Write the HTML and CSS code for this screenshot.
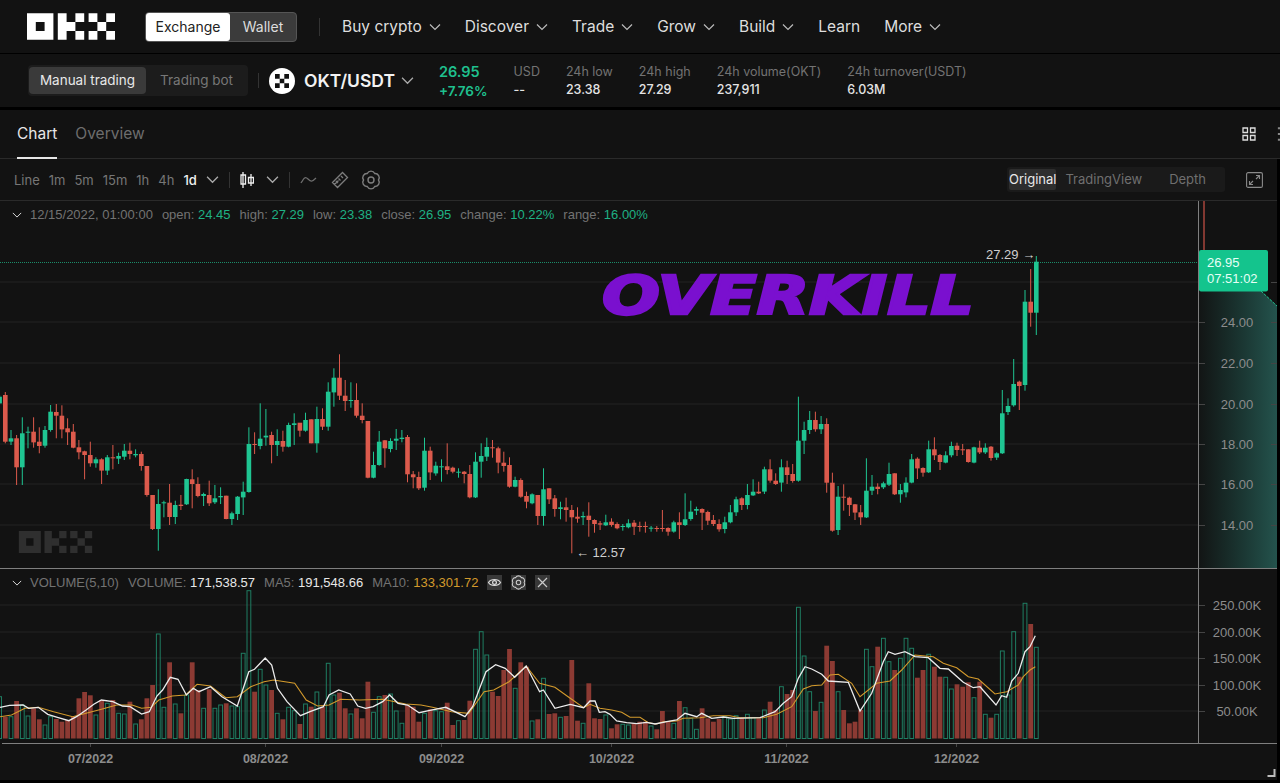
FILE: index.html
```html
<!DOCTYPE html>
<html lang="en">
<head>
    <meta charset="UTF-8">
    <title>OKT/USDT - OKX</title>
    <link rel="stylesheet" href="styles.css">
</head>
<body>
    <svg class="icon-defs" width="0" height="0">
        <symbol id="okx-logo" viewBox="0 0 88 26.4">
            <path d="M0 0h26.4v26.4H0zM8.8 8.8v8.8h8.8V8.8z" fill-rule="evenodd"/>
            <path d="M30.8 0h8.8v26.4h-8.8zM39.6 8.8h8.8v8.8h-8.8zM48.4 0h8.8v8.8h-8.8zM48.4 17.6h8.8v8.8h-8.8z"/>
            <path d="M61.6 0h8.8v8.8h-8.8zM79.2 0H88v8.8h-8.8zM70.4 8.8h8.8v8.8h-8.8zM61.6 17.6h8.8v8.8h-8.8zM79.2 17.6H88v8.8h-8.8z"/>
        </symbol>
        <symbol id="chevron" viewBox="0 0 12 12">
            <path d="M1 3.5l5 5 5-5" fill="none" stroke="currentColor" stroke-width="1.2"/>
        </symbol>
        <symbol id="gear" viewBox="0 0 24 24">
            <path d="M21 12A5 5 0 0 1 16.5 19.8A5 5 0 0 1 7.5 19.8A5 5 0 0 1 3 12A5 5 0 0 1 7.5 4.2A5 5 0 0 1 16.5 4.2A5 5 0 0 1 21 12z" fill="none" stroke="currentColor" stroke-width="1.7"/>
            <circle cx="12" cy="12" r="3.6" fill="none" stroke="currentColor" stroke-width="1.7"/>
        </symbol>
    </svg>

    <header class="topbar">
        <svg class="logo"><use href="#okx-logo"/></svg>
        <div class="switch">
            <span class="switch-item switch-on">Exchange</span>
            <span class="switch-item">Wallet</span>
        </div>
        <span class="topbar-sep"></span>
        <nav class="nav">
            <a class="nav-item">Buy crypto <svg class="chev"><use href="#chevron"/></svg></a>
            <a class="nav-item">Discover <svg class="chev"><use href="#chevron"/></svg></a>
            <a class="nav-item">Trade <svg class="chev"><use href="#chevron"/></svg></a>
            <a class="nav-item">Grow <svg class="chev"><use href="#chevron"/></svg></a>
            <a class="nav-item">Build <svg class="chev"><use href="#chevron"/></svg></a>
            <a class="nav-item">Learn</a>
            <a class="nav-item">More <svg class="chev"><use href="#chevron"/></svg></a>
        </nav>
    </header>

    <section class="ticker">
        <div class="mode">
            <span class="mode-item mode-on">Manual trading</span>
            <span class="mode-item">Trading bot</span>
        </div>
        <span class="ticker-sep"></span>
        <svg class="coin" viewBox="0 0 26 26">
            <circle cx="13" cy="13" r="13" fill="#fff"/>
            <path d="M6 6h4.700v4.700H6zM15.300 6H20v4.700h-4.700zM10.700 10.700h4.600v4.600h-4.600zM6 15.300h4.700V20H6zM15.300 15.300H20V20h-4.700z" fill="#111"/>
        </svg>
        <span class="pair">OKT/USDT</span>
        <svg class="pair-chev"><use href="#chevron"/></svg>
        <div class="stats">
            <div class="stat-price">
                <span class="price-now">26.95</span>
                <span class="price-pct">+7.76%</span>
            </div>
            <div class="stat"><span class="stat-label">USD</span><span class="stat-value">--</span></div>
            <div class="stat"><span class="stat-label">24h low</span><span class="stat-value">23.38</span></div>
            <div class="stat"><span class="stat-label">24h high</span><span class="stat-value">27.29</span></div>
            <div class="stat"><span class="stat-label">24h volume(OKT)</span><span class="stat-value">237,911</span></div>
            <div class="stat"><span class="stat-label">24h turnover(USDT)</span><span class="stat-value">6.03M</span></div>
        </div>
    </section>

    <main class="panel">
        <div class="tabs">
            <a class="tab tab-on">Chart</a>
            <a class="tab">Overview</a>
            <div class="tabs-right">
                <svg class="tab-icon" viewBox="0 0 14 14">
                    <path d="M1 1h4.500v4.500H1zM8.500 1H13v4.500H8.500zM1 8.500h4.500V13H1zM8.500 8.500H13V13H8.500z" fill="none" stroke="#ddd" stroke-width="1.300"/>
                </svg>
                <svg class="tab-icon" viewBox="0 0 14 16">
                    <path d="M0 1.500h10M0 8h10M0 14.500h10" stroke="#888" stroke-width="2.200"/>
                </svg>
            </div>
        </div>

        <div class="toolbar">
            <a class="tool">Line</a>
            <a class="tool">1m</a>
            <a class="tool">5m</a>
            <a class="tool">15m</a>
            <a class="tool">1h</a>
            <a class="tool">4h</a>
            <a class="tool tool-on">1d</a>
            <svg class="tool-chev"><use href="#chevron"/></svg>
            <span class="tool-sep"></span>
            <svg class="tool-icon" viewBox="0 0 14 18">
                <path d="M3 1v16M3.500 4H1v9h4.500V4zM11 3v12M8.500 6.500v5.500h5V6.500z" fill="none" stroke="#eee" stroke-width="1.300"/>
            </svg>
            <svg class="tool-chev tool-chev-wide"><use href="#chevron"/></svg>
            <span class="tool-sep"></span>
            <svg class="tool-icon tool-wave" viewBox="0 0 17 10">
                <path d="M1 8c3-5 4-7 7-4s4 3 8-1" fill="none" stroke="#6f6f6f" stroke-width="1.200"/>
            </svg>
            <svg class="tool-icon tool-ruler" viewBox="0 0 18 18">
                <path d="M1.500 11.500L11.500 1.500l5 5-10 10zM5 10l2 2M7.500 7.500l2 2M10 5l2 2M5 5M3.500 13.500l4-4" fill="none" stroke="#7d7d7d" stroke-width="1.300"/>
            </svg>
            <svg class="tool-icon tool-gear"><use href="#gear"/></svg>
            <div class="toolbar-right">
                <div class="views">
                    <span class="view view-on">Original</span>
                    <span class="view">TradingView</span>
                    <span class="view">Depth</span>
                </div>
                <svg class="expand" viewBox="0 0 17 16">
                    <rect x="0.600" y="0.600" width="15.800" height="14.800" rx="1.500" fill="none" stroke="#8a8a8a" stroke-width="1.100"/>
                    <path d="M10 3.500h3.500V7M13.500 3.500L10 7M7 12.500H3.500V9M3.500 12.500L7 9" fill="none" stroke="#8a8a8a" stroke-width="1.100"/>
                </svg>
            </div>
        </div>

        <div class="chart">
            <svg class="chart-svg" viewBox="0 201 1277 579">
                <defs>
                    <linearGradient id="depth-fill" x1="0" x2="1" y1="0" y2="0">
                        <stop offset="0" stop-color="#1d4f47" stop-opacity="0.05"/>
                        <stop offset="1" stop-color="#24534d"/>
                    </linearGradient>
                </defs>

                <path class="grid" d="M0 282H1198M0 322H1198M0 363H1198M0 404H1198M0 444H1198M0 484H1198M0 525H1198"/>
                <path class="grid" d="M0 605H1198M0 632H1198M0 658H1198M0 685H1198M0 711H1198"/>

                <g id="candles"></g>
                <g id="volumes"></g>
                <polyline id="ma10" class="ma-orange"/>
                <polyline id="ma5" class="ma-white"/>

                <text class="watermark-text" x="0" y="0"></text>
                <use href="#okx-logo" x="18" y="531" width="75" height="22" class="watermark"/>
                <text class="overkill" x="602" y="314" textLength="372" lengthAdjust="spacingAndGlyphs">OVERKILL</text>

                <path class="last-line" d="M0 262.500H1198"/>
                <text class="peak" x="986" y="259">27.29 →</text>
                <text class="peak" x="576" y="557">← 12.57</text>

                <path class="depth-area" d="M1199 291H1261L1277 306V568H1199z"/>
                <path class="depth-edge" d="M1261 291L1277 306"/>
                <path class="depth-red" d="M1204 201V251"/>

                <path class="axis" d="M0 568.500H1277M1198.500 201V743M2 743.500H1277"/>
                <path class="axis-tick" d="M1199 282.500H1205M1271 282.500H1277M1199 322.500H1205M1271 322.500H1277M1199 363.500H1205M1271 363.500H1277M1199 404.500H1205M1271 404.500H1277M1199 444.500H1205M1271 444.500H1277M1199 484.500H1205M1271 484.500H1277M1199 525.500H1205M1271 525.500H1277"/>
                <path class="axis-tick" d="M1199 605.500H1205M1199 632.500H1205M1199 658.500H1205M1199 685.500H1205M1199 711.500H1205"/>
                <path class="axis-tick" d="M90.500 744V747M265.500 744V747M441.500 744V747M611.500 744V747M786.500 744V747M956.500 744V747"/>

                <g class="price-axis">
                    <text x="1237" y="327">24.00</text>
                    <text x="1237" y="368">22.00</text>
                    <text x="1237" y="409">20.00</text>
                    <text x="1237" y="449">18.00</text>
                    <text x="1237" y="489">16.00</text>
                    <text x="1237" y="530">14.00</text>
                </g>
                <g class="volume-axis">
                    <text x="1237" y="610">250.00K</text>
                    <text x="1237" y="637">200.00K</text>
                    <text x="1237" y="663">150.00K</text>
                    <text x="1237" y="690">100.00K</text>
                    <text x="1237" y="716">50.00K</text>
                </g>
                <g class="time-axis">
                    <text x="90.500" y="763">07/2022</text>
                    <text x="265.500" y="763">08/2022</text>
                    <text x="441.500" y="763">09/2022</text>
                    <text x="611.500" y="763">10/2022</text>
                    <text x="786.500" y="763">11/2022</text>
                    <text x="956.500" y="763">12/2022</text>
                </g>

                <rect class="last-tag" x="1199" y="250" width="69" height="41.500" rx="2"/>
                <text class="last-tag-text" x="1207" y="267">26.95</text>
                <text class="last-tag-text" x="1207" y="283">07:51:02</text>
                <path class="corner" d="M1267.500 776H1274.500V769" />
            </svg>

            <div class="legend legend-main">
                <svg class="legend-chev"><use href="#chevron"/></svg>
                <span>12/15/2022, 01:00:00</span>
                <span>open: <b class="up">24.45</b></span>
                <span>high: <b class="up">27.29</b></span>
                <span>low: <b class="up">23.38</b></span>
                <span>close: <b class="up">26.95</b></span>
                <span>change: <b class="up">10.22%</b></span>
                <span>range: <b class="up">16.00%</b></span>
            </div>

            <div class="legend legend-vol">
                <svg class="legend-chev"><use href="#chevron"/></svg>
                <span>VOLUME(5,10)</span>
                <span>VOLUME: <b class="white">171,538.57</b></span>
                <span>MA5: <b class="white">191,548.66</b></span>
                <span>MA10: <b class="gold">133,301.72</b></span>
                <span class="legend-btns">
                    <span class="legend-btn">
                        <svg viewBox="0 0 15 15"><path d="M1.500 7.500C4 3.500 11 3.500 13.500 7.500C11 11.500 4 11.500 1.500 7.500z" fill="none" stroke="#ddd" stroke-width="1.200"/><circle cx="7.500" cy="7.500" r="1.900" fill="none" stroke="#ddd" stroke-width="1.200"/></svg>
                    </span>
                    <span class="legend-btn"><svg class="legend-gear"><use href="#gear"/></svg></span>
                    <span class="legend-btn">
                        <svg viewBox="0 0 15 15"><path d="M3 3l9 9M12 3l-9 9" stroke="#ccc" stroke-width="1.200"/></svg>
                    </span>
                </span>
            </div>
        </div>
    </main>

    <script src="chart.js"></script>
</body>
</html>
```

FILE: styles.css
```css
* {
    box-sizing: border-box;
}
body {
    margin: 0;
    width: 1280px;
    height: 783px;
    overflow: hidden;
    background-color: #000;
    font-family: Inter, "Liberation Sans", sans-serif;
    color: #e6e6e6;
    display: flex;
    flex-direction: column;
}
b {
    font-weight: normal;
}
.icon-defs {
    position: absolute;
}

/* top bar */
.topbar {
    height: 53px;
    flex: none;
    background-color: #121212;
    display: flex;
    align-items: center;
    padding-left: 27px;
}
.logo {
    width: 88px;
    height: 27px;
    fill: #fff;
}
.switch {
    display: flex;
    height: 30px;
    margin-left: 30px;
    background-color: #3b3b3b;
    border: 1px solid #555;
    border-radius: 4px;
}
.switch-item {
    width: 66px;
    font-size: 14px;
    line-height: 28px;
    text-align: center;
    color: #ddd;
}
.switch-on {
    width: 84px;
    background-color: #fff;
    color: #222;
    border-radius: 3px;
}
.topbar-sep {
    width: 1px;
    height: 18px;
    margin: 0 22px;
    background-color: #333;
}
.nav {
    display: flex;
    gap: 24px;
}
.nav-item {
    display: flex;
    align-items: center;
    font-size: 15.500px;
    color: #dedede;
}
.chev {
    width: 12px;
    height: 12px;
    margin-left: 7px;
    color: #bbb;
}

/* pair bar */
.ticker {
    height: 53px;
    margin-top: 1px;
    flex: none;
    background-color: #121212;
    display: flex;
    align-items: center;
    padding-left: 28px;
}
.mode {
    display: flex;
    height: 31px;
    padding: 2px 1px;
    width: 220px;
    background-color: #1c1c1c;
    border-radius: 4px;
}
.mode-item {
    font-size: 13.500px;
    line-height: 27px;
    padding: 0 14px;
    color: #777;
    white-space: nowrap;
}
.mode-on {
    width: 119px;
    padding: 0;
    text-align: center;
    background-color: #3a3a3a;
    color: #e8e8e8;
    border-radius: 4px;
}
.ticker-sep {
    width: 1px;
    height: 15px;
    margin: 0 10px;
    background-color: #333;
}
.coin {
    width: 26px;
    height: 26px;
}
.pair {
    margin-left: 9px;
    font-size: 17.500px;
    font-weight: 600;
    color: #f2f2f2;
}
.pair-chev {
    width: 13px;
    height: 13px;
    margin-left: 6px;
    color: #aaa;
}
.stats {
    display: flex;
    gap: 26px;
    margin-left: 25px;
}
.stat-price {
    display: flex;
    flex-direction: column;
    gap: 3px;
    font-weight: 600;
    color: #1fc08e;
}
.price-now {
    font-size: 14.500px;
}
.price-pct {
    font-size: 13.500px;
}
.stat {
    display: flex;
    flex-direction: column;
    gap: 3px;
    padding-top: 1px;
    font-size: 12.500px;
}
.stat-label {
    color: #737373;
}
.stat-value {
    color: #e4e4e4;
    font-weight: 500;
}

/* chart panel */
.panel {
    flex: none;
    width: 1280px;
    height: 670px;
    margin-top: 3px;
    display: flex;
    flex-direction: column;
}
.tabs {
    height: 49px;
    flex: none;
    background-color: #121212;
    border-bottom: 1px solid #2a2a2a;
    display: flex;
    padding-left: 17px;
    gap: 18px;
}
.tab {
    font-size: 15.500px;
    line-height: 47px;
    color: #6d6d6d;
}
.tab-on {
    color: #e6e6e6;
    height: 49px;
    border-bottom: 2px solid #e6e6e6;
}
.tabs-right {
    margin-left: auto;
    display: flex;
    align-items: center;
    gap: 21px;
    margin-right: -11px;
    padding-bottom: 1px;
}
.tab-icon {
    width: 14px;
    height: 14px;
}
.toolbar {
    height: 42px;
    flex: none;
    background-color: #121212;
    border-bottom: 1px solid #2a2a2a;
    display: flex;
    align-items: center;
    padding-left: 14px;
    width: 1277px;
}
.tool {
    font-size: 13px;
    color: #767676;
    margin-right: 9px;
}
.tool-on {
    color: #f0f0f0;
    font-weight: 500;
}
.tool-chev {
    width: 13px;
    height: 13px;
    color: #aaa;
}
.tool-chev-wide {
    margin-left: 12px;
}
.tool-sep {
    width: 1px;
    height: 16px;
    margin: 0 10px;
    background-color: #333;
}
.tool-icon {
    width: 14px;
    height: 18px;
}
.tool-wave {
    width: 17px;
    height: 10px;
}
.tool-ruler {
    width: 18px;
    height: 18px;
    margin-left: 14px;
}
.tool-gear {
    width: 20px;
    height: 20px;
    margin-left: 12px;
    color: #7d7d7d;
}
.toolbar-right {
    margin-left: auto;
    display: flex;
    align-items: center;
    gap: 21px;
    padding-right: 14px;
}
.views {
    display: flex;
    width: 218px;
    height: 25px;
    padding: 2px;
    background-color: #1a1a1a;
    border-radius: 3px;
}
.view {
    font-size: 13px;
    line-height: 21px;
    padding: 0 9px;
    color: #6f6f6f;
    margin-right: 9px;
}
.view-on {
    width: 66px;
    padding: 0;
    margin-right: 0;
    text-align: center;
    color: #e8e8e8;
    background-color: #2e2e2e;
    border-radius: 2px;
}
.expand {
    width: 17px;
    height: 16px;
}

/* chart body, coordinates in the svg are page pixels */
.chart {
    position: relative;
    width: 1277px;
    height: 579px;
    background-color: #121212;
}
.chart-svg {
    display: block;
    width: 1277px;
    height: 579px;
    font-family: "Liberation Sans", Arial, sans-serif;
}
.grid {
    stroke: #222;
    stroke-width: 1;
    fill: none;
}
.axis {
    stroke: #7f7f7f;
    stroke-width: 1;
    fill: none;
}
.axis-tick {
    stroke: #444;
    stroke-width: 1;
    fill: none;
}
.ma-white {
    fill: none;
    stroke: #ececec;
    stroke-width: 1.300;
}
.ma-orange {
    fill: none;
    stroke: #d39a2c;
    stroke-width: 1.100;
}
.watermark {
    fill: #2f2f2f;
}
.overkill {
    font-family: "DejaVu Sans", sans-serif;
    font-size: 53px;
    font-weight: bold;
    font-style: italic;
    fill: #7a10cf;
    stroke: #7a10cf;
    stroke-width: 2.500px;
}
.last-line {
    stroke: #1fc08e;
    stroke-width: 1;
    stroke-dasharray: 1 1;
    opacity: 0.7;
}
.peak {
    font-size: 13px;
    fill: #cfcfcf;
}
.depth-area {
    fill: url(#depth-fill);
}
.depth-edge {
    stroke: #1fc08e;
    stroke-dasharray: 3 1;
    fill: none;
}
.depth-red {
    stroke: #a8463d;
    stroke-width: 1.500;
}
.price-axis text,
.volume-axis text {
    font-size: 13px;
    fill: #8c8c8c;
    text-anchor: middle;
}
.time-axis text {
    font-size: 12.500px;
    font-weight: bold;
    fill: #8c8c8c;
    text-anchor: middle;
}
.last-tag {
    fill: #14c48d;
}
.last-tag-text {
    font-size: 13px;
    fill: #e6fff6;
}
.corner {
    stroke: #bdbdbd;
    stroke-width: 2;
    fill: none;
}
.legend {
    position: absolute;
    left: 12px;
    display: flex;
    align-items: center;
    gap: 9px;
    font-family: "Liberation Sans", Arial, sans-serif;
    font-size: 13px;
    color: #737373;
    white-space: nowrap;
}
.legend-main {
    top: 6px;
}
.legend-vol {
    top: 374px;
}
.legend-chev {
    width: 10px;
    height: 10px;
    color: #d8d8d8;
    margin-right: -1px;
}
.up {
    color: #1fb184;
}
.white {
    color: #e8e8e8;
}
.gold {
    color: #d39a2c;
}
.legend-btns {
    display: flex;
    gap: 9px;
}
.legend-btn {
    display: flex;
    width: 15px;
    height: 15px;
    background-color: #383838;
}
.legend-btn svg {
    width: 15px;
    height: 15px;
}
.legend-btn .legend-gear {
    color: #ccc;
}
```

FILE: chart.js
```js
// daily candles, numbers are read off the chart at 3x zoom: [green?, high, top, bottom, low]
var STEP = 5.665
var LEFT = 5.3

function xAt(i) {
    return LEFT + STEP * i
}

var zones = [
    { base: 380, first: -1, rows: [
        [1,45,50,70,72],[0,36,45,185,190],[1,150,175,185,195],[0,165,175,262,315],[1,112,160,262,315],[1,140,155,158,205],
        [0,112,155,187,203],[0,142,185,198,220],[1,138,150,197,203],[1,75,95,150,155],[0,72,96,107,175],[0,76,107,148,175],
        [0,115,145,157,195],[0,132,155,203,205],[0,180,202,217,238],[0,212,214,225,298],[0,185,225,250,260],[1,232,238,250,263],
        [0,235,238,272,312],[1,225,232,272,285],[0,195,232,234,268],[1,218,228,236,252],[1,192,212,230,240],[0,188,212,222,238],
        [1,208,222,226,232],[0,215,222,258,272],[0,258,258,345,350],[0,345,345,447,450],[1,328,372,447,512],[1,362,367,370,412],
        [0,312,368,411,435],[1,362,375,411,432],[0,345,374,378,390],[1,296,297,373,375],[0,268,298,312,385],[0,292,312,348,352],
        [1,338,342,348,378],[0,302,345,370,378],[1,315,355,367,372],[1,322,348,352,372],[0,347,347,417,418],[1,395,400,417,435],
        [1,348,350,402,420],[1,305,335,352,405],[1,142,192,336,338],[0,157,192,195,222],[1,70,176,198,208],[1,87,167,172,197],
        [0,155,165,195,250],[1,148,183,195,228],[0,152,183,200,215],[1,128,135,200,202],[1,100,130,135,195],[0,130,128,152,170],
        [1,98,120,152,155],[0,118,118,190,190],[1,80,117,190,218]
    ] },
    { base: 345, first: 56, rows: [
        [0,190,222,245,255],[1,112,140,245,257],[1,70,98,142,185],[0,28,98,152,165],[0,105,152,168,198],[1,112,165,167,188],
        [0,115,165,212,218],[0,175,212,225,235],[0,228,228,398,400],[1,320,360,398,400],[1,258,290,360,362],[0,285,286,310,368],
        [1,280,288,312,322],[1,252,281,287,315],[1,255,278,282,292],[0,270,276,388,412],[0,378,388,397,430],[0,380,396,430,435],
        [1,278,317,428,437],[0,305,317,382,405],[1,350,362,385,392],[1,343,364,367,410],[0,295,364,375,388],[0,365,368,380,385],
        [1,370,380,383,398],[0,378,380,387,415],[0,360,387,457,460],[1,322,350,457,459],[1,295,333,350,398],[1,278,306,335,348],
        [0,285,307,310,338],[0,305,310,353,385],[0,320,353,363,380],[0,337,360,425,428],[1,395,405,425,427],[0,400,405,455,458],
        [0,440,453,470,490],[1,445,448,475,478]
    ] },
    { base: 390, first: 94, rows: [
        [0,315,315,378,405],[1,235,298,378,407],[0,295,295,328,342],[0,315,325,357,380],[1,335,352,357,388],[0,323,352,360,395],
        [0,345,360,382,490],[0,352,380,386,398],[1,365,378,382,405],[0,337,377,390,440],[0,388,390,402,428],[0,393,400,404,420],
        [1,374,397,406,408],[0,385,395,405,410],[0,397,402,415,418],[1,402,408,410,422],[1,388,400,412,415],[0,390,398,410,435],
        [0,395,408,411,425],[0,395,408,410,428],[1,408,413,415,425],[0,408,414,416,425],[0,360,414,416,425],[0,412,414,425,437],
        [1,392,397,425,428],[0,367,397,405,447],[1,310,388,405,408],[1,332,365,387,392],[1,350,357,362,375],[0,355,357,368,420],
        [0,362,366,392,405],[0,375,390,402,408],[0,388,402,418,425],[1,380,397,417,430],[1,345,367,397,400],[1,320,328,367,378],
        [0,322,325,345,360],[1,282,315,345,358],[1,268,305,316,318],[0,275,305,310,312],[1,230,238,305,312],[0,208,238,272,278],
        [0,250,272,282,285]
    ] },
    { base: 380, first: 137, rows: [
        [1,238,262,308,335],[0,242,262,285,312],[0,252,282,303,308],[1,50,182,302,305],[1,125,150,182,222],[1,93,120,150,162],
        [0,95,120,148,155],[1,108,132,148,162],[0,115,132,308,338],[0,278,308,452,455],[1,318,350,450,465],[0,313,350,353,392],
        [0,350,353,375,408],[0,372,373,398,420],[0,375,397,412,435],[1,235,332,412,414],[1,285,320,332,345],[0,310,320,327,343],
        [1,305,310,322,327],[1,248,282,314,318],[0,280,280,343,345],[1,312,330,343,368],[1,292,308,337,352],[1,222,238,308,310],
        [0,232,236,265,297],[0,262,264,278,290],[1,182,208,277,279],[0,172,208,226,240],[0,222,225,246,270],[1,214,226,248,250],
        [1,185,198,226,232],[0,188,197,210,228],[0,192,208,210,225],[0,208,208,246,248],[1,200,202,248,250],[0,182,203,217,222],
        [1,190,203,217,222],[0,198,200,234,242],[1,217,220,233,240]
    ] },
    { base: 250, first: 176, rows: [
        [1,420,490,610,612],[1,445,468,486,495],[1,327,402,466,470],[0,392,395,408,480],[1,120,155,405,422],[0,57,155,188,230],[1,18,35,188,255]
    ] }
]

// tops of the volume bars, same idea
var volumeZones = [
    { base: 570, first: -1, tops: [
        380,440,440,393,405,438,415,448,465,440,447,455,450,440,385,366,376,435,390,400,390,430,432,395,462,448,385,345,192,412,
        277,402,430,375,277,360,415,358,415,405,400,408,410,250,62,365,298,345,360,430,448,412,422,462,402,410,366,410,280,375,
        368,415,432,415,445,335,427,380,375,372,423,460,405,410,455,430,418,422,425,398,465,452,450,392,238,185,255,365,378,300,
        237,355,277,290,453,448,325,432,430,442,438,270,452,460,340
    ] },
    { base: 595, first: 104, tops: [
        370,372,360,400,388,388,390,385,380,380,393,403,348,378,385,318,338,370,403,340,370,380,372,365,372,362,368,358,368,370,
        345,320,345,275,297,285,37,183,290,348,322,152,198,290,345,385,380,345,163,215,155,130,200,225,190,130,160,248,225,178,
        215,245,247,282,268,275,262,308,260,358,368,358,168,300,110,245,25,87,157
    ] }
]

// moving averages: first part from a crop 2.613x wide, second from a 3x crop
var ma5 = [[0,412],[25,406],[60,405],[75,415],[100,412],[125,433],[150,442],[180,452],[200,440],[225,420],[245,403],[265,390],[295,395],[320,408],[340,410],[370,432],[390,425],[410,378],[425,360],[445,322],[465,328],[487,375],[505,355],[520,365],[550,350],[580,380],[620,408],[650,305],[665,298],[693,264],[710,285],[725,355],[750,395],[785,437],[810,425],[845,410],[860,375],[885,360],[915,372],[935,408],[955,415],[975,410],[1000,395],[1018,375],[1040,400],[1065,405],[1095,428],[1120,422],[1165,412],[1215,440],[1235,410],[1270,305],[1295,284],[1320,295],[1345,322],[1375,288],[1410,365],[1420,360],[1450,415],[1490,403],[1525,413]]
var ma5b = [[0,318],[15,318],[28,352],[45,350],[60,358],[80,378],[110,383],[140,386],[170,382],[195,387],[230,380],[260,375],[285,355],[320,365],[335,355],[365,370],[400,366],[430,370],[510,368],[555,350],[580,325],[605,305],[625,250],[645,215],[665,222],[695,238],[715,258],[775,262],[810,348],[845,295],[880,200],[895,170],[915,178],[945,170],[975,185],[1015,188],[1050,220],[1075,222],[1120,262],[1150,278],[1170,275],[1218,330],[1235,302],[1250,307],[1265,258],[1285,235],[1305,170],[1320,155],[1336,122]]
var ma10 = [[0,440],[30,435],[65,415],[100,412],[140,425],[190,440],[225,430],[265,418],[305,405],[345,405],[370,415],[395,412],[415,390],[450,378],[485,375],[515,343],[550,348],[590,383],[620,380],[655,350],[690,335],[715,330],[770,340],[800,390],[830,408],[860,405],[890,388],[940,390],[1000,388],[1060,402],[1100,405],[1130,412],[1180,425],[1225,430],[1265,365],[1290,360],[1330,335],[1375,288],[1410,340],[1450,352],[1490,385],[1525,413]]
var ma10b = [[0,328],[30,340],[65,345],[95,352],[120,367],[150,367],[175,383],[200,387],[220,380],[260,378],[280,370],[330,368],[370,362],[420,362],[450,368],[520,368],[560,358],[605,335],[640,282],[665,272],[695,270],[720,240],[745,238],[785,265],[810,305],[860,265],[900,258],[935,225],[975,180],[1030,185],[1060,205],[1100,218],[1135,245],[1165,252],[1215,297],[1250,290],[1285,270],[1300,245],[1320,225],[1336,215]]

var colors = {}
var candleSvg = ''
zones.forEach(function (zone) {
    zone.rows.forEach(function (row, n) {
        var i = zone.first + n
        var x = xAt(i)
        var color = row[0] ? '#1fc592' : '#dc5a4c'
        var y = function (v) { return (zone.base + v / 3).toFixed(1) }
        colors[i] = row[0]
        candleSvg += '<path d="M' + x.toFixed(1) + ' ' + y(row[1]) + 'V' + y(row[4]) + '" stroke="' + color + '" stroke-width="1"/>'
        var h = Math.max((row[3] - row[2]) / 3, 1)
        candleSvg += '<rect x="' + (x - 2.3).toFixed(1) + '" y="' + y(row[2]) + '" width="4.6" height="' + h.toFixed(1) + '" fill="' + color + '"/>'
    })
})
document.getElementById('candles').innerHTML = candleSvg

var volumeSvg = ''
volumeZones.forEach(function (zone) {
    zone.tops.forEach(function (top, n) {
        var i = zone.first + n
        var x = xAt(i)
        var y = zone.base + top / 3
        var h = 738.5 - y
        if (colors[i]) {
            volumeSvg += '<rect x="' + (x - 1.9).toFixed(1) + '" y="' + y.toFixed(1) + '" width="3.8" height="' + h.toFixed(1) + '" fill="none" stroke="#1f7d62" stroke-width="1"/>'
        } else {
            volumeSvg += '<rect x="' + (x - 2.4).toFixed(1) + '" y="' + y.toFixed(1) + '" width="4.8" height="' + h.toFixed(1) + '" fill="#8c3a33"/>'
        }
    })
})
document.getElementById('volumes').innerHTML = volumeSvg

function linePoints(a, b) {
    var pts = a.map(function (p) { return (p[0] / 2.613).toFixed(1) + ',' + (570 + p[1] / 3).toFixed(1) })
    return pts.concat(b.map(function (p) { return (590 + p[0] / 3).toFixed(1) + ',' + (595 + p[1] / 3).toFixed(1) })).join(' ')
}
document.getElementById('ma5').setAttribute('points', linePoints(ma5, ma5b))
document.getElementById('ma10').setAttribute('points', linePoints(ma10, ma10b))
```
